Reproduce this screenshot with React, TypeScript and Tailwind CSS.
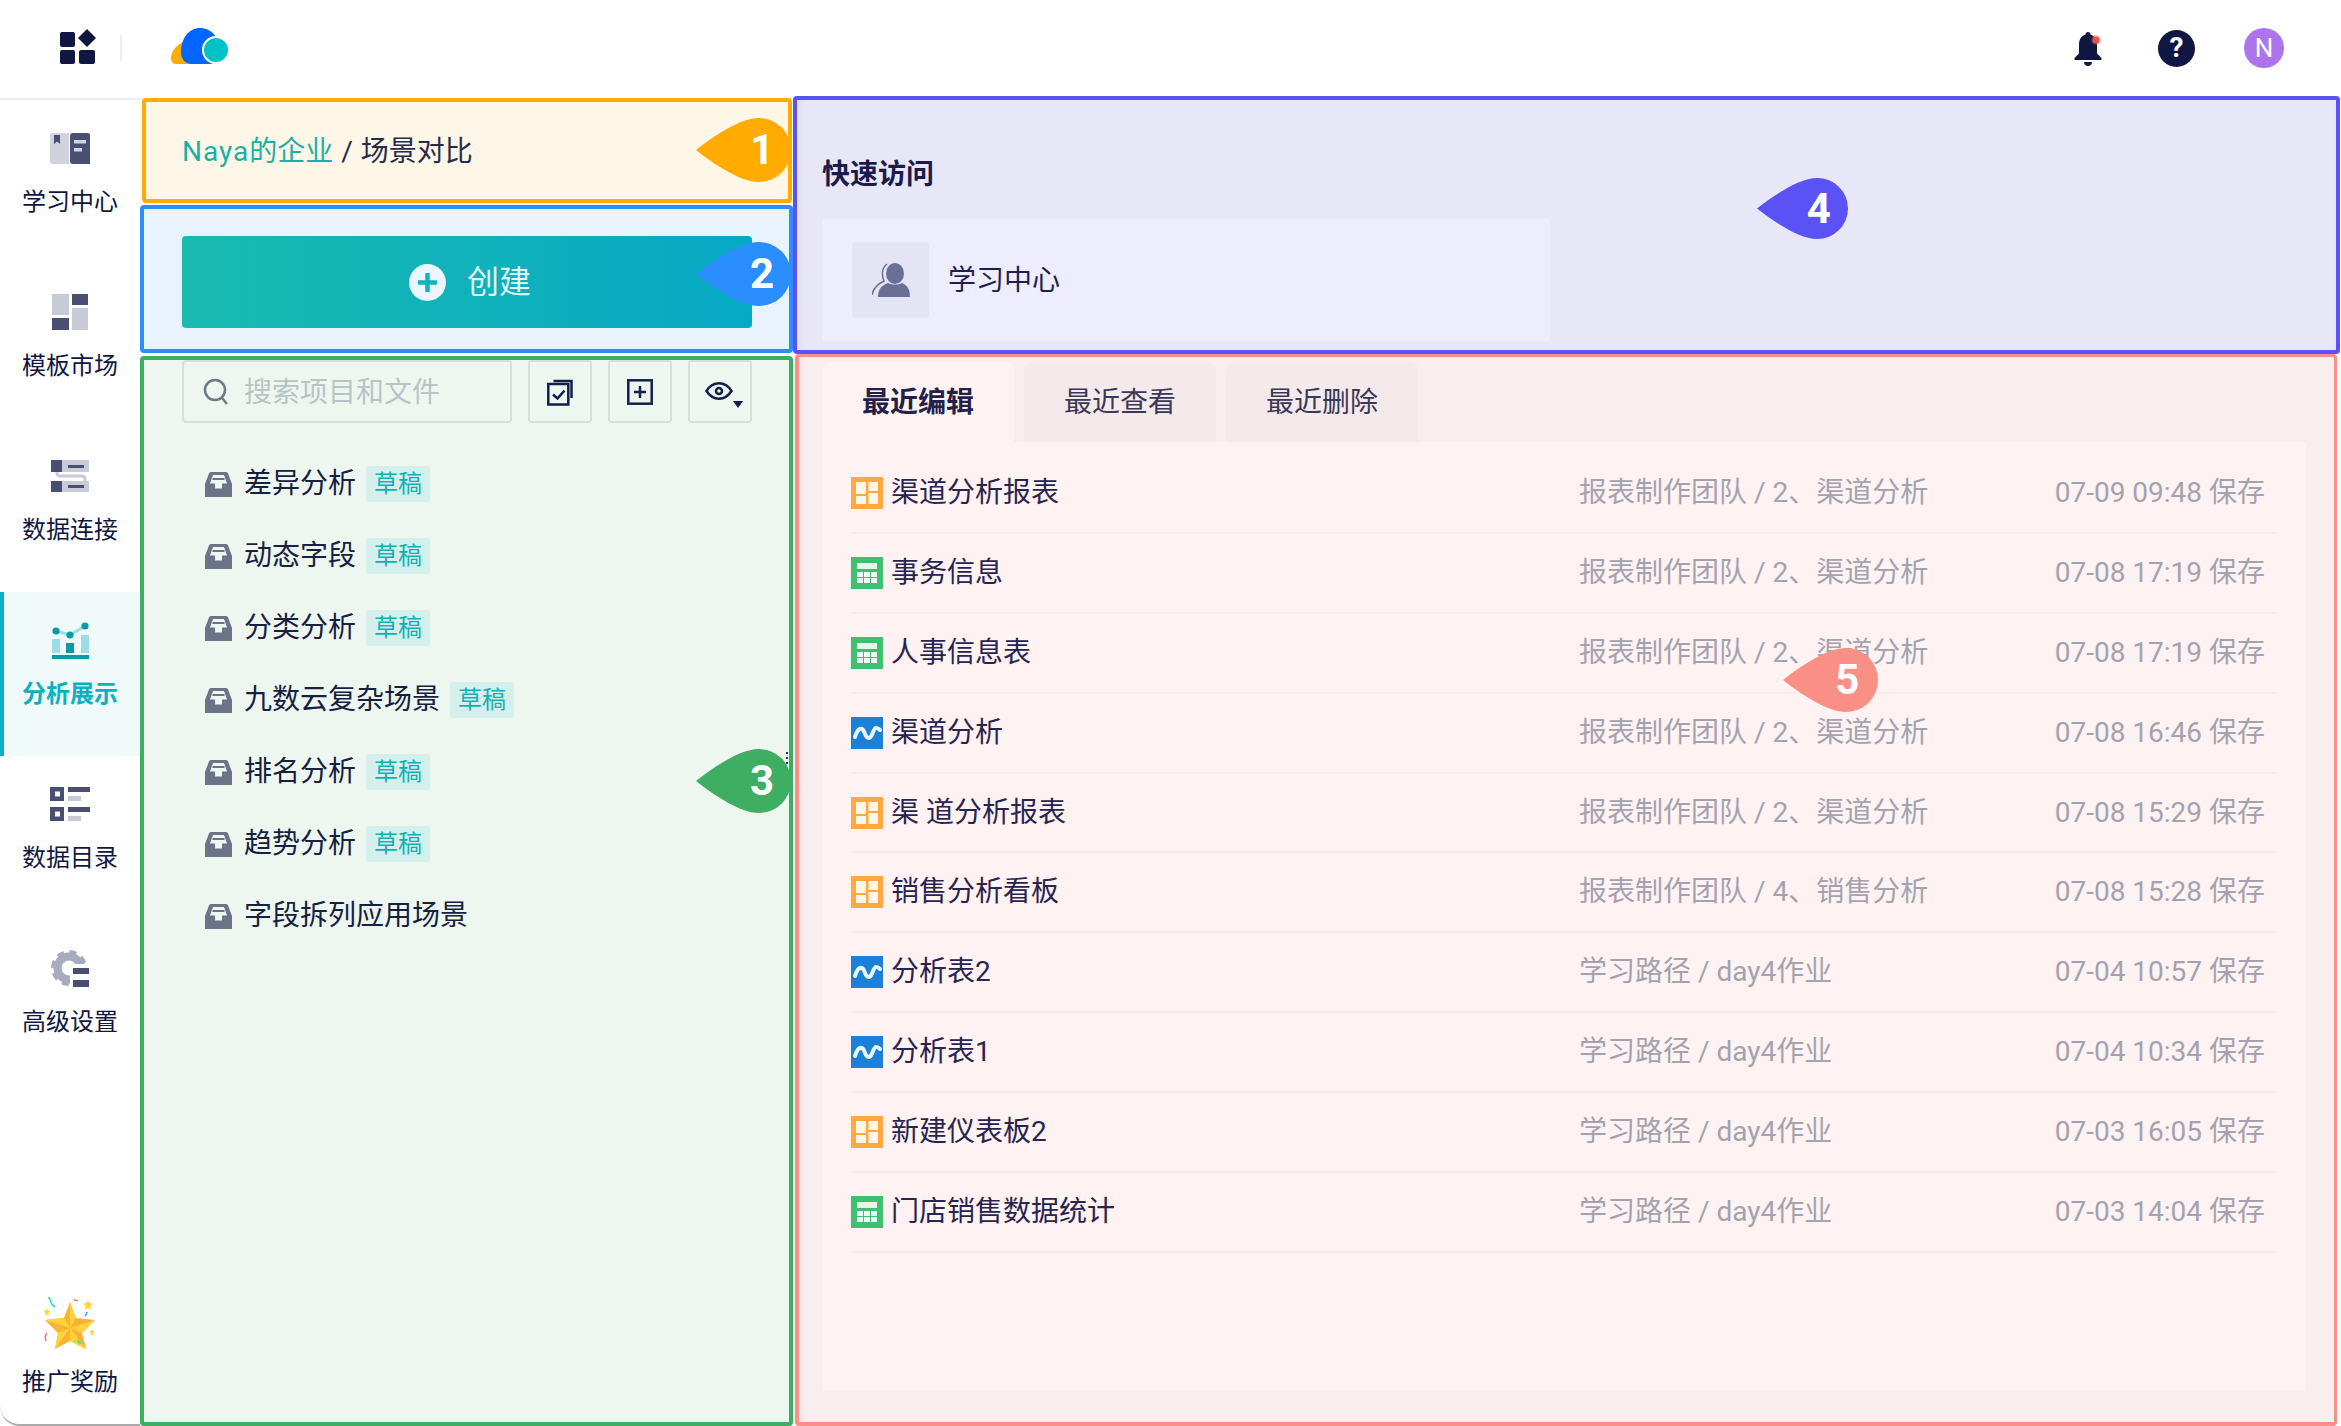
import type { ReactNode } from "react";

const NAVY = "#0f1642";
const DARK = "#4a4e72";
const LIGHT = "#c8cad8";

function BookIcon() {
  return (
    <svg width="40" height="31" viewBox="0 0 40 31">
      <path d="M2 0h17v31H2a2 2 0 0 1-2-2V2a2 2 0 0 1 2-2z" fill="#d0d2de" />
      <path d="M4 2h6v9L7 8.500 4 11z" fill={DARK} />
      <path d="M23 0h15a2 2 0 0 1 2 2v29H23a3 3 0 0 1-3-3V3a3 3 0 0 1 3-3z" fill={DARK} />
      <rect x="24" y="7" width="12" height="3.500" fill="#d0d2de" />
      <rect x="24" y="15" width="8" height="3.500" fill="#d0d2de" />
    </svg>
  );
}

function TemplateIcon() {
  return (
    <svg width="36" height="36" viewBox="0 0 36 36">
      <rect x="0" y="0" width="17" height="21" fill={LIGHT} />
      <rect x="20" y="0" width="16" height="11" fill={DARK} />
      <rect x="0" y="24" width="17" height="12" fill={DARK} />
      <rect x="20" y="14" width="16" height="22" fill={LIGHT} />
    </svg>
  );
}

function ConnectIcon() {
  return (
    <svg width="38" height="32" viewBox="0 0 38 32">
      <rect x="0" y="0" width="38" height="12" fill={LIGHT} />
      <rect x="0" y="0" width="11" height="12" fill={DARK} />
      <rect x="17" y="5" width="16" height="3" fill={DARK} />
      <path d="M6 12v1a3 3 0 0 0 3 3h22a3 3 0 0 1 3 3v2" fill="none" stroke={LIGHT} strokeWidth="3" />
      <rect x="0" y="21" width="38" height="11" fill={LIGHT} />
      <rect x="0" y="21" width="11" height="11" fill={DARK} />
      <rect x="17" y="25" width="16" height="3" fill={DARK} />
    </svg>
  );
}

function AnalysisIcon() {
  return (
    <svg width="37" height="37" viewBox="0 0 37 37">
      <path d="M4 9l14 4L33 4" fill="none" stroke="#9adde6" strokeWidth="3" />
      <circle cx="4" cy="9" r="3.600" fill="#0a9bab" />
      <circle cx="18" cy="13" r="3.600" fill="#0a9bab" />
      <circle cx="33" cy="4" r="3.600" fill="#0a9bab" />
      <rect x="0" y="17" width="8" height="14" fill="#9adde6" />
      <rect x="14" y="21" width="8" height="10" fill="#0a9bab" />
      <rect x="29" y="13" width="8" height="18" fill="#9adde6" />
      <rect x="0" y="33" width="37" height="4" fill="#0a9bab" />
    </svg>
  );
}

function CatalogIcon() {
  return (
    <svg width="40" height="34" viewBox="0 0 40 34">
      <path fillRule="evenodd" d="M0 0h14v14H0zM5 4.500v5h5v-5z" fill={DARK} />
      <rect x="18" y="0" width="22" height="5" fill={DARK} />
      <rect x="18" y="9" width="13" height="5" fill={LIGHT} />
      <path fillRule="evenodd" d="M0 20h14v14H0zM5 24.500v5h5v-5z" fill={DARK} />
      <rect x="18" y="20" width="22" height="5" fill={DARK} />
      <rect x="18" y="29" width="13" height="5" fill={LIGHT} />
    </svg>
  );
}

function GearIcon() {
  return (
    <svg width="38" height="38" viewBox="0 0 38 38">
      <circle cx="18" cy="19" r="11.500" fill="none" stroke="#a8aabd" strokeWidth="8" />
      <circle cx="18" cy="19" r="16" fill="none" stroke="#a8aabd" strokeWidth="4" strokeDasharray="7 5.570" />
      <rect x="19" y="15" width="19" height="23" fill="#fff" />
      <rect x="22" y="19" width="16" height="6" fill={DARK} />
      <rect x="22" y="31" width="16" height="7" fill={DARK} />
    </svg>
  );
}

function StarIcon() {
  return (
    <svg width="52" height="53" viewBox="0 0 52 53">
      <path d="M26 5l6 16 19 2-13 13 4 16-16-8-15 8 3-16L1 23l19-2z" fill="#f9b233" />
      <path d="M26 5l6 16-6 10zM51 23l-13 13-12-5zM42 52l-16-8v-13zM11 52l3-16 12-5zM1 23l19-2 6 10z" fill="#ffd43b" />
      <path d="M4 0c4 2 1 7 7 10" fill="none" stroke="#2ed9a8" strokeWidth="1.500" />
      <path d="M30 2c1 2 3 2 4 1" fill="none" stroke="#f8786a" strokeWidth="1.500" />
      <path d="M43 15c0 2-1 3-2 4" fill="none" stroke="#27a8e8" strokeWidth="1.500" />
      <path d="M3 36c-2 2-2 5-1 8" fill="none" stroke="#f8786a" strokeWidth="1.500" />
      <path d="M34 43c0 2 1 3 3 3" fill="none" stroke="#2ed9a8" strokeWidth="1.500" />
      <path d="M44 3l1.500 3 3.500.5-2.500 2.500.5 3.500-3-1.500-3 1.500.5-3.500-2.500-2.500 3.500-.5z" fill="#ffd43b" />
      <path d="M3 10l1 2.500 2.500.5-2 2 .5 3-2-1.500-2 1.500.5-3-2-2 2.500-.5z" fill="#ffd43b" transform="translate(0 1)" />
      <path d="M48 32l1 2 1.500.5-1.500 1.500.5 2.500-1.500-1-1.500 1 .5-2.500-1.500-1.500 1.500-.5z" fill="#ffd43b" />
    </svg>
  );
}

const navItems: { label: string; icon: ReactNode; active?: boolean }[] = [
  { label: "学习中心", icon: <BookIcon /> },
  { label: "模板市场", icon: <TemplateIcon /> },
  { label: "数据连接", icon: <ConnectIcon /> },
  { label: "分析展示", icon: <AnalysisIcon />, active: true },
  { label: "数据目录", icon: <CatalogIcon /> },
  { label: "高级设置", icon: <GearIcon /> },
];

function Header() {
  return (
    <header className="flex h-[100px] shrink-0 items-start border-b-2 border-[#ecedf3] bg-white">
      <svg className="ml-[60px] mt-[29px]" width="36" height="36" viewBox="0 0 36 36">
        <rect x="0" y="3" width="15" height="15" rx="2" fill={NAVY} />
        <path d="M27 0l9 9-9 9-9-9z" fill={NAVY} />
        <rect x="0" y="21" width="15" height="14" rx="2" fill={NAVY} />
        <rect x="19" y="21" width="16" height="14" rx="2" fill={NAVY} />
      </svg>
      <div className="ml-[24px] mt-[35px] h-[26px] w-[2px] bg-[#ececf0]" />
      <svg className="ml-[49px] mt-[28px]" width="58" height="36" viewBox="0 0 58 36">
        <path d="M20 13C8 13 0 22 0 30c0 4 2 6 6 6h16z" fill="#ffab00" />
        <path d="M10 24C10 10 18 0 29 0c11 0 19 9 19 20 0 8-3 16-9 16H21c-7 0-11-5-11-12z" fill="#0066ff" />
        <circle cx="45" cy="22" r="13" fill="#00c2c7" stroke="#fff" strokeWidth="2" />
      </svg>
      <div className="ml-auto mr-[57px] mt-[28px] flex items-center">
        <svg width="30" height="36" viewBox="0 0 30 36">
          <path d="M14 2c1.500 0 2.500 1 2.500 2.500 5 1.500 6.500 6 6.500 10v9l4.500 4.500v2H.5V28L5 23.500v-9c0-4 1.500-8.500 6.500-10C11.500 3 12.500 2 14 2z" fill={NAVY} />
          <path d="M10 32h8c0 2.500-2 4-4 4s-4-1.500-4-4z" fill={NAVY} />
          <circle cx="22" cy="10" r="5" fill="#ea4f4f" opacity="0.35" />
          <circle cx="22" cy="10" r="3.500" fill="#ea4f4f" />
        </svg>
        <div className="ml-[54px] flex h-[37px] w-[37px] items-center justify-center rounded-full bg-[#0f1642] text-[28px] font-bold leading-none text-white">
          ?
        </div>
        <div className="ml-[49px] flex h-[40px] w-[40px] items-center justify-center rounded-full bg-[#ad74ec] text-[26px] leading-none text-white">
          N
        </div>
      </div>
    </header>
  );
}

function Sidebar() {
  return (
    <nav className="flex w-[140px] shrink-0 flex-col rounded-bl-[20px] border-b-2 border-[#aaaaaa] bg-white">
      {navItems.map((item) => (
        <div
          key={item.label}
          className={
            item.active
              ? "flex h-[164px] flex-col items-center border-l-4 border-[#06b0c4] bg-[#f0fafb] pt-[29px] pr-[4px]"
              : "flex h-[164px] flex-col items-center pt-[29px]"
          }
        >
          <div className="flex h-[38px] items-center justify-center">{item.icon}</div>
          <div
            className={
              item.active
                ? "mt-[18px] text-[24px] font-bold leading-[34px] text-[#0dafc2]"
                : "mt-[18px] text-[24px] leading-[34px] text-[#0f1642]"
            }
          >
            {item.label}
          </div>
        </div>
      ))}
      <div className="mt-auto flex flex-col items-center pb-[25px]">
        <StarIcon />
        <div className="mt-[15px] text-[24px] leading-[34px] text-[#0f1642]">推广奖励</div>
      </div>
    </nav>
  );
}

function Badge({ n, fill, className, numberClass }: { n: number; fill: string; className: string; numberClass: string }) {
  return (
    <div className={className}>
      <svg className="absolute inset-0 h-full w-full" viewBox="0 0 95 64" preserveAspectRatio="none">
        <path d="M0 32C18 18 44 0 63 0a32 32 0 0 1 0 64C44 64 18 46 0 32z" fill={fill} />
      </svg>
      <span className={numberClass}>{n}</span>
    </div>
  );
}

const numberLeft = "relative ml-[39%] w-[60px] text-center text-[42px] font-bold leading-none text-white";
const numberRight = "relative ml-[36%] w-[60px] text-center text-[42px] font-bold leading-none text-white";

function ToolButton({ children }: { children: ReactNode }) {
  return (
    <div className="flex h-[63px] w-[64px] items-center justify-center rounded-[4px] border-2 border-[#d5e0db]">
      {children}
    </div>
  );
}

function SceneIcon() {
  return (
    <svg width="27" height="25" viewBox="0 0 27 25" className="shrink-0">
      <path d="M6 0h15a2 2 0 0 1 2 1.500L27 12v13H0V12L4 1.500A2 2 0 0 1 6 0z" fill="#6b7486" />
      <path d="M8 3h11l3 8.500h-5v5h-7v-5H5z" fill="#edf6f0" />
      <path d="M7.500 7h12" stroke="#6b7486" strokeWidth="2" />
    </svg>
  );
}

const scenes = [
  { name: "差异分析", draft: true },
  { name: "动态字段", draft: true },
  { name: "分类分析", draft: true },
  { name: "九数云复杂场景", draft: true },
  { name: "排名分析", draft: true },
  { name: "趋势分析", draft: true },
  { name: "字段拆列应用场景", draft: false },
];

function MiddleColumn() {
  return (
    <div className="-mt-[2px] flex w-[653px] shrink-0 flex-col">
      <div className="relative ml-[2px] flex h-[105px] w-[650px] items-center rounded-[4px] border-4 border-[#ffab00] bg-[#fef6e6] pl-[36px] pt-[2px] text-[28px] leading-[40px]">
        <span className="text-[#1ab0a8]">
          <span className="tracking-[1px]">Naya</span>的企业
        </span>
        <span className="mx-[8px] text-[#262b4a]">/</span>
        <span className="text-[#262b4a]">场景对比</span>
        <Badge n={1} fill="#ffab00" numberClass={numberLeft} className="absolute left-[550px] top-[16px] flex h-[64px] w-[95px] items-center" />
      </div>

      <div className="relative mt-[2px] h-[148px] rounded-[4px] border-4 border-[#2b8eff] bg-[#e9f3fe] pl-[38px] pt-[27px]">
        <div className="flex h-[92px] w-[570px] items-center justify-center gap-[21px] rounded-[4px] bg-gradient-to-r from-[#1abab0] to-[#06a9c4] pl-[6px]">
          <svg width="37" height="37" viewBox="0 0 37 37">
            <circle cx="18.500" cy="18.500" r="18.500" fill="#eaf6fb" />
            <path d="M18.500 9v19M9 18.500h19" stroke="#12b4bb" strokeWidth="4.500" />
          </svg>
          <span className="text-[32px] leading-[44px] text-[#dff6f6]">创建</span>
        </div>
        <Badge n={2} fill="#2b8eff" numberClass={numberLeft} className="absolute left-[552px] top-[33px] flex h-[64px] w-[95px] items-center" />
      </div>

      <div className="relative mt-[3px] h-[1070px] rounded-[4px] border-4 border-[#3dae62] bg-[#edf7f0] pl-[38px]">
        <div className="flex gap-[16px]">
          <div className="flex h-[63px] w-[330px] items-center rounded-[4px] border-2 border-[#d5e0db] pl-[19px]">
            <svg width="26" height="28" viewBox="0 0 26 28" className="shrink-0">
              <circle cx="12" cy="12" r="10" fill="none" stroke="#6b7a85" strokeWidth="2.500" />
              <path d="M19 20l5 6" stroke="#6b7a85" strokeWidth="2.500" />
            </svg>
            <span className="ml-[15px] pt-[2px] text-[28px] leading-[40px] text-[#b9c4c6]">搜索项目和文件</span>
          </div>
          <ToolButton>
            <svg width="27" height="28" viewBox="0 0 27 28" fill="none" stroke="#10204a" strokeWidth="2.500">
              <path d="M6.500 3h18v17" />
              <rect x="1.300" y="6" width="20" height="20.500" fill="#edf7f0" />
              <path d="M6 16.500l4.500 4 7-8" />
            </svg>
          </ToolButton>
          <ToolButton>
            <svg width="26" height="26" viewBox="0 0 26 26" fill="none" stroke="#10204a" strokeWidth="2.500">
              <rect x="1.300" y="1.300" width="23.400" height="23.400" />
              <path d="M13 7v12M7 13h12" />
            </svg>
          </ToolButton>
          <ToolButton>
            <svg className="ml-[8px] mt-[8px]" width="38" height="27" viewBox="0 0 38 27">
              <path d="M1.500 9C5 3.500 9 1.300 14 1.300S23 3.500 26.500 9C23 14.500 19 16.700 14 16.700S5 14.500 1.500 9z" fill="none" stroke="#10204a" strokeWidth="2.500" />
              <circle cx="14" cy="9" r="3" fill="none" stroke="#10204a" strokeWidth="2.500" />
              <path d="M28 19h10l-5 7z" fill="#10204a" />
            </svg>
          </ToolButton>
        </div>
        <ul className="mt-[25px]">
          {scenes.map((s) => (
            <li key={s.name} className="flex h-[72px] items-center pl-[23px]">
              <SceneIcon />
              <span className="ml-[12px] text-[28px] leading-[40px] text-[#16203f]">{s.name}</span>
              {s.draft ? (
                <span className="ml-[10px] flex h-[36px] w-[64px] items-center justify-center rounded-[4px] bg-[#d5f0ec] text-[24px] leading-none text-[#12b0b5]">
                  草稿
                </span>
              ) : null}
            </li>
          ))}
        </ul>
        <div className="absolute right-[1px] top-[392px] flex flex-col gap-[3px]">
          <span className="h-[2px] w-[2px] bg-[#1f3a5f]" />
          <span className="h-[2px] w-[2px] bg-[#1f3a5f]" />
          <span className="h-[2px] w-[2px] bg-[#1f3a5f]" />
        </div>
        <Badge n={3} fill="#3dae62" numberClass={numberLeft} className="absolute left-[552px] top-[389px] flex h-[64px] w-[95px] items-center" />
      </div>
    </div>
  );
}

type FileKind = "board" | "sheet" | "chart";

function FileIcon({ kind }: { kind: FileKind }) {
  if (kind === "board") {
    return (
      <svg width="32" height="32" viewBox="0 0 32 32" className="shrink-0">
        <rect width="32" height="32" fill="#ffa940" />
        <rect x="5" y="5" width="10" height="12" fill="#fff6ea" />
        <rect x="17.500" y="5" width="9.500" height="9" fill="#fff6ea" />
        <rect x="5" y="19" width="10" height="8" fill="#fff6ea" />
        <rect x="17.500" y="16" width="9.500" height="11" fill="#fff6ea" />
      </svg>
    );
  }
  if (kind === "sheet") {
    return (
      <svg width="32" height="32" viewBox="0 0 32 32" className="shrink-0">
        <rect width="32" height="32" fill="#3dc06f" />
        <rect x="6" y="6" width="20" height="6" fill="#e8f5ec" />
        {[6, 13, 20].map((x) =>
          [15, 21].map((y) => <rect key={`${x}-${y}`} x={x} y={y} width="6" height="5" fill="#f2fbf5" />),
        )}
      </svg>
    );
  }
  return (
    <svg width="32" height="32" viewBox="0 0 32 32" className="shrink-0">
      <rect width="32" height="32" fill="#1a80d8" />
      <path d="M4 20C6 14 8 11 11 12C14 13 14 22 18 21C22 20 22 11 25 11C27 11 28 12 29 13" fill="none" stroke="#eaf4fd" strokeWidth="4" strokeLinecap="round" />
    </svg>
  );
}

const files: { name: string; kind: FileKind; path: string; time: string }[] = [
  { name: "渠道分析报表", kind: "board", path: "报表制作团队 / 2、渠道分析", time: "07-09 09:48 保存" },
  { name: "事务信息", kind: "sheet", path: "报表制作团队 / 2、渠道分析", time: "07-08 17:19 保存" },
  { name: "人事信息表", kind: "sheet", path: "报表制作团队 / 2、渠道分析", time: "07-08 17:19 保存" },
  { name: "渠道分析", kind: "chart", path: "报表制作团队 / 2、渠道分析", time: "07-08 16:46 保存" },
  { name: "渠 道分析报表", kind: "board", path: "报表制作团队 / 2、渠道分析", time: "07-08 15:29 保存" },
  { name: "销售分析看板", kind: "board", path: "报表制作团队 / 4、销售分析", time: "07-08 15:28 保存" },
  { name: "分析表2", kind: "chart", path: "学习路径 / day4作业", time: "07-04 10:57 保存" },
  { name: "分析表1", kind: "chart", path: "学习路径 / day4作业", time: "07-04 10:34 保存" },
  { name: "新建仪表板2", kind: "board", path: "学习路径 / day4作业", time: "07-03 16:05 保存" },
  { name: "门店销售数据统计", kind: "sheet", path: "学习路径 / day4作业", time: "07-03 14:04 保存" },
];

function RightColumn() {
  return (
    <div className="-mt-[4px] flex flex-1 flex-col">
      <div className="relative z-10 mr-[1px] h-[258px] rounded-[4px] border-4 border-[#5b52f5] bg-[#e8e7f7] pl-[25px] pt-[55px] shadow-[inset_10px_0_8px_-8px_rgba(0,0,0,0.05)]">
        <h2 className="text-[28px] font-bold leading-[40px] text-[#1b1b4b]">快速访问</h2>
        <div className="mt-[23px] flex h-[124px] w-[728px] items-center rounded-[4px] bg-[#eeedfd] pl-[30px]">
          <div className="flex h-[76px] w-[77px] items-center justify-center rounded-[4px] bg-[#e4e4f4]">
            <svg width="38" height="34" viewBox="0 0 38 34">
              <ellipse cx="23" cy="10.500" rx="9" ry="10.500" fill="#6b6e95" />
              <path d="M6 34c0-8 4-12 10-14 5 2 10 2 14 0 5 2 8 6 8 14z" fill="#6b6e95" />
              <path d="M15 1C9 5 10 14 12 18 6 21 1 26 0 32" fill="none" stroke="#6b6e95" strokeWidth="1.500" />
            </svg>
          </div>
          <span className="ml-[19px] pt-[1px] text-[28px] leading-[40px] text-[#1f1f50]">学习中心</span>
        </div>
        <Badge n={4} fill="#5b52f5" numberClass={numberRight} className="absolute left-[960px] top-[78px] flex h-[61px] w-[91px] items-center" />
      </div>

      <div className="relative ml-[2px] mr-[4px] h-[1072px] rounded-[4px] border-[3px] border-b-4 border-l-4 border-[#fa9085] bg-[#f8eeee] pl-[23px] pt-[5px] shadow-[inset_10px_0_8px_-8px_rgba(0,0,0,0.05)]">
        <div className="flex gap-[10px]">
          <div className="flex h-[80px] w-[192px] items-center justify-center rounded-t-[8px] bg-[#fef2f2] pt-[2px] text-[28px] font-bold text-[#242048]">
            最近编辑
          </div>
          <div className="flex h-[80px] w-[192px] items-center justify-center rounded-t-[8px] bg-[#f4eaeb] pt-[2px] text-[28px] text-[#3b3756]">
            最近查看
          </div>
          <div className="flex h-[80px] w-[192px] items-center justify-center rounded-t-[8px] bg-[#f4eaeb] pt-[2px] text-[28px] text-[#3b3756]">
            最近删除
          </div>
        </div>
        <div className="h-[949px] w-[1484px] bg-[#fef2f2] pl-[29px] pr-[29px] pt-[12px]">
          {files.map((f) => (
            <div key={f.name} className="flex h-[79.9px] items-center border-b-2 border-[#f6edee] pr-[12px]">
              <div className="flex w-[728px] items-center">
                <FileIcon kind={f.kind} />
                <span className="ml-[8px] text-[28px] leading-[40px] text-[#282450]">{f.name}</span>
              </div>
              <span className="w-[473px] text-[28px] leading-[40px] text-[#a5a2b0]">{f.path}</span>
              <span className="flex-1 text-right text-[28px] leading-[40px] text-[#a5a2b0]">{f.time}</span>
            </div>
          ))}
        </div>
        <Badge n={5} fill="#fa9085" numberClass={numberRight} className="absolute left-[984px] top-[291px] flex h-[64px] w-[95px] items-center" />
      </div>
    </div>
  );
}

export default function App() {
  return (
    <div className="flex h-[1426px] w-[2341px] flex-col overflow-hidden bg-white font-['Roboto','Noto_Sans_CJK_SC',sans-serif]">
      <Header />
      <div className="flex flex-1">
        <Sidebar />
        <MiddleColumn />
        <RightColumn />
      </div>
    </div>
  );
}
